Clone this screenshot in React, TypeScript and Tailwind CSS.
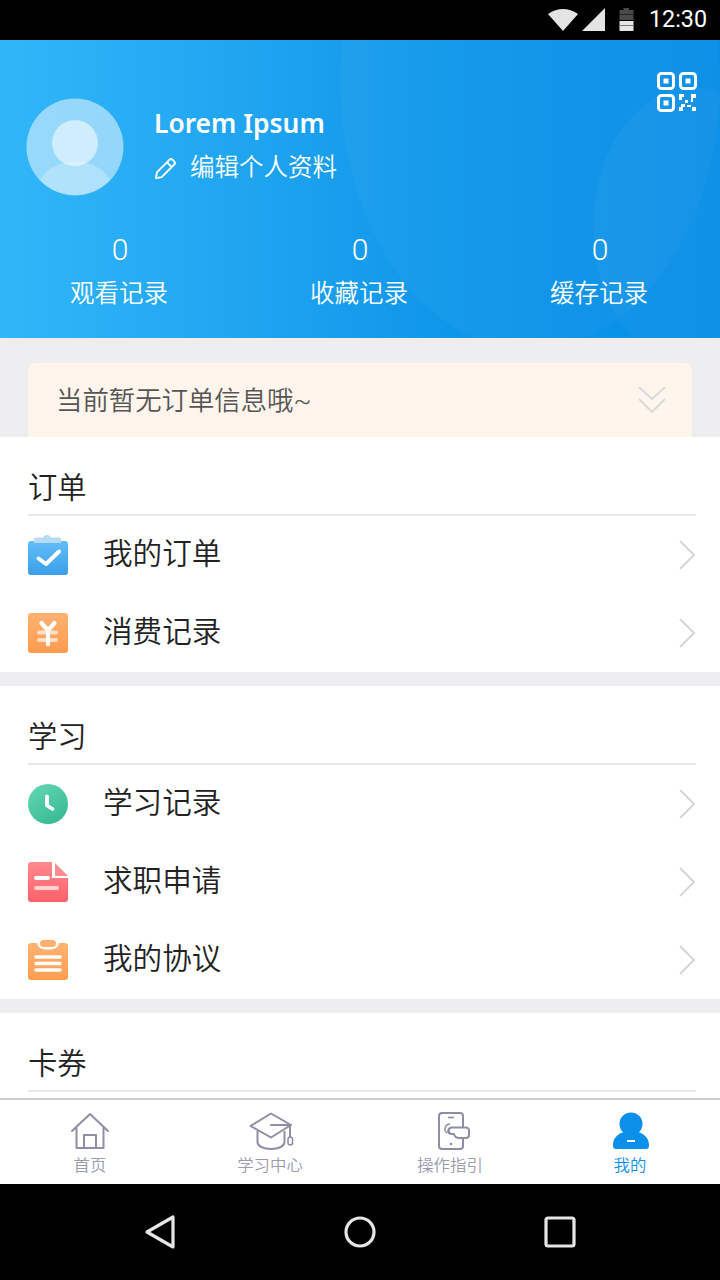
const FONT = "font-['Roboto','Noto_Sans_CJK_SC',sans-serif]";

function Chevron() {
  return (
    <svg width="18" height="32" viewBox="0 0 18 32" className="shrink-0">
      <path d="M2 2 L16 16 L2 30" fill="none" stroke="#d6d6d8" strokeWidth="2" />
    </svg>
  );
}

function OrderIcon() {
  return (
    <svg width="40" height="40" viewBox="0 0 40 40">
      <defs>
        <linearGradient id="ob" x1="0" y1="0" x2="0" y2="1"><stop offset="0" stopColor="#62bdf8" /><stop offset="1" stopColor="#3a9fe8" /></linearGradient>
      </defs>
      <rect x="0" y="6" width="40" height="34" rx="3" fill="url(#ob)" />
      <path d="M6 8 V4 a1.5 1.5 0 0 1 1.5-1.5 H15 a4.5 4.5 0 0 1 8 0 H31.5 a1.5 1.5 0 0 1 1.5 1.5 V8 Z" fill="#b5dcf3" />
      <path d="M10.5 23.5 L18 29 L31 16.5" fill="none" stroke="#fff" strokeWidth="4" strokeLinecap="round" strokeLinejoin="round" />
    </svg>
  );
}

function YenIcon() {
  return (
    <svg width="40" height="40" viewBox="0 0 40 40">
      <defs>
        <linearGradient id="yb" x1="0" y1="0" x2="0" y2="1"><stop offset="0" stopColor="#ffb272" /><stop offset="1" stopColor="#ff9a4e" /></linearGradient>
      </defs>
      <rect width="40" height="40" rx="3" fill="url(#yb)" />
      <path d="M11 19.5 H28 M11 27 H28" stroke="#ffe0c4" strokeWidth="3.8" strokeLinecap="round" />
      <path d="M13.5 10 L20 17.5 L26.5 10 M20 17.5 V31.5" fill="none" stroke="#fff" strokeWidth="4.2" strokeLinecap="round" strokeLinejoin="round" />
    </svg>
  );
}

function ClockIcon() {
  return (
    <svg width="40" height="40" viewBox="0 0 40 40">
      <defs>
        <linearGradient id="cb" x1="0.2" y1="0" x2="0.8" y2="1"><stop offset="0" stopColor="#62d6b0" /><stop offset="1" stopColor="#35b991" /></linearGradient>
      </defs>
      <circle cx="20" cy="20" r="20" fill="url(#cb)" />
      <path d="M19 12.5 V21.5 L24.5 25" fill="none" stroke="#fff" strokeWidth="3.8" strokeLinecap="round" strokeLinejoin="round" />
    </svg>
  );
}

function DocIcon() {
  return (
    <svg width="40" height="40" viewBox="0 0 40 40">
      <defs>
        <linearGradient id="db" x1="0" y1="0" x2="0" y2="1"><stop offset="0" stopColor="#ff8a90" /><stop offset="1" stopColor="#fd6169" /></linearGradient>
      </defs>
      <path d="M3 0 H24 V16 H40 V37 a3 3 0 0 1-3 3 H3 a3 3 0 0 1-3-3 V3 a3 3 0 0 1 3-3 Z" fill="url(#db)" />
      <path d="M27 1 L40 14 H27 Z" fill="#ff8a90" />
      <path d="M8 16 H20" stroke="#fff" strokeWidth="4" strokeLinecap="round" />
      <path d="M8 26 H29" stroke="#ffd0cc" strokeWidth="4" strokeLinecap="round" />
    </svg>
  );
}

function ClipIcon() {
  return (
    <svg width="40" height="40" viewBox="0 0 40 40">
      <defs>
        <linearGradient id="kb" x1="0" y1="0" x2="0" y2="1"><stop offset="0" stopColor="#ffb472" /><stop offset="1" stopColor="#ff9d52" /></linearGradient>
      </defs>
      <path d="M3 3 H9 C10 8 14 9.5 20 9.5 C26 9.5 30 8 31 3 H37 a3 3 0 0 1 3 3 V37 a3 3 0 0 1-3 3 H3 a3 3 0 0 1-3-3 V6 a3 3 0 0 1 3-3 Z" fill="url(#kb)" />
      <rect x="12" y="0" width="16" height="7" rx="3.5" fill="#ffb070" />
      <path d="M8 17 H32 M8 23.5 H32 M8 30 H32" stroke="#fff" strokeWidth="3.4" strokeLinecap="round" />
    </svg>
  );
}

function Row({ icon, label }: { icon: React.ReactNode; label: string }) {
  return (
    <div className="flex h-[78.2px] items-center pb-[1px] pl-7 pr-6">
      <div className="h-10 w-10 shrink-0">{icon}</div>
      <div className="ml-[35px] flex-1 text-[29.6px] font-[350] leading-none text-[#222222]">{label}</div>
      <Chevron />
    </div>
  );
}

function SectionTitle({ text }: { text: string }) {
  return (
    <div className="mx-6 ml-7 flex h-[79px] items-end border-b-2 border-[#e8e8ea] pb-[6px] text-[29.3px] font-[350] leading-[40px] text-[#222222]">
      {text}
    </div>
  );
}

function Stat({ label }: { label: string }) {
  return (
    <div className="flex w-60 flex-col items-center text-white">
      <div className="text-[30px] font-light leading-[36px]">0</div>
      <div className="mt-[8px] pr-[2px] text-[24.5px] font-[350] leading-[36px]">{label}</div>
    </div>
  );
}

function Tab({ label, active, icon }: { label: string; active?: boolean; icon: React.ReactNode }) {
  return (
    <div className="flex w-[180px] flex-col items-center pt-[11px]">
      <div className="flex h-[40px] items-center justify-center">{icon}</div>
      <div className={`mt-[3px] text-[16.4px] font-[350] leading-[24px] ${active ? "text-[#0a8fea]" : "text-[#9a9ab0]"}`}>{label}</div>
    </div>
  );
}

export default function App() {
  const tabStroke = "#8e8ea6";
  return (
    <div className={`flex h-[1280px] w-[720px] flex-col overflow-hidden bg-[#eeeef1] ${FONT}`}>
      <div className="flex h-10 shrink-0 items-center justify-end bg-black pr-[13px]">
        <svg width="30" height="24" viewBox="0 0 30 24" className="mr-[4px]">
          <path d="M0 7 Q15 -3 30 7 L15 24 Z" fill="#e4e4e4" transform="translate(0 -1)" />
        </svg>
        <svg width="24" height="24" viewBox="0 0 24 24" className="mr-[13px]">
          <path d="M0 23 L23 0 V23 Z" fill="#e4e4e4" />
        </svg>
        <svg width="15" height="24" viewBox="0 0 15 24" className="mr-[15px]">
          <path d="M4.5 0 H10 V2 H14.5 V12 H0.5 V2 H4.5 Z" fill="#4a4a4a" />
          <rect x="0.5" y="13" width="14" height="10" fill="#e4e4e4" />
          <rect x="0.5" y="6" width="14" height="1" fill="#222" />
          <rect x="0.5" y="17" width="14" height="1" fill="#777" />
        </svg>
        <div className="font-['Roboto'] text-[23.3px] leading-none text-white">12:30</div>
      </div>

      <div className="relative h-[298px] shrink-0 overflow-hidden bg-gradient-to-r from-[#31b6f9] via-[#0f97ea] via-[60%] to-[#078de7]">
        <svg className="absolute inset-0" width="720" height="298" viewBox="0 0 720 298">
          <ellipse cx="530" cy="40" rx="190" ry="270" fill="#ffffff" opacity="0.03" />
          <ellipse cx="693" cy="187" rx="100" ry="140" fill="#ffffff" opacity="0.035" />
        </svg>
        <div className="relative flex h-[192px] items-start pl-[26px] pt-[58px]">
          <svg width="98" height="98" viewBox="0 0 98 98" className="shrink-0">
            <circle cx="49" cy="49" r="48.5" fill="#ffffff" opacity="0.5" />
            <path d="M14 82 C22 69 34 64 49 64 C64 64 76 69 84 82 A48.5 48.5 0 0 1 14 82 Z" fill="#ffffff" opacity="0.25" />
            <circle cx="49" cy="45" r="23" fill="#ffffff" opacity="0.55" />
          </svg>
          <div className="ml-[30px]">
            <div className="mt-[2px] font-['Noto_Sans'] text-[26.4px] font-semibold leading-[46px] text-white">Lorem Ipsum</div>
            <div className="mt-[4px] flex items-center text-[24.5px] font-[350] leading-[36px] text-white">
              <svg width="23" height="23" viewBox="0 0 24 24" className="mr-[13px]">
                <path d="M2 22 L3 16 L16 3 a2.5 2.5 0 0 1 3.5 0 L21 4.5 a2.5 2.5 0 0 1 0 3.5 L8 21 Z M13.5 5.5 L18.5 10.5" fill="none" stroke="#fff" strokeWidth="2" strokeLinejoin="round" />
              </svg>
              编辑个人资料
            </div>
          </div>
          <svg width="40" height="40" viewBox="0 0 40 40" className="absolute right-[23px] top-[32px]">
            <g fill="none" stroke="#fff" strokeWidth="3">
              <rect x="1.5" y="1.5" width="15" height="15" rx="3" />
              <rect x="23.5" y="1.5" width="15" height="15" rx="3" />
              <rect x="1.5" y="23.5" width="15" height="15" rx="3" />
            </g>
            <g fill="#fff">
              <rect x="6.5" y="6.5" width="5" height="5" />
              <rect x="28.5" y="6.5" width="5" height="5" />
              <rect x="6.5" y="28.5" width="5" height="5" />
              <path d="M22 22 H27 V25 H25 V28 H22 Z" />
              <path d="M34 22 H39 V26 H36 V30 H34 Z" />
              <rect x="28" y="28" width="3" height="3" />
              <path d="M24 32 H28 V35 H26 V39 H22 V35 H24 Z" />
              <rect x="30" y="33" width="4" height="2" />
              <rect x="35" y="35" width="4" height="4" />
            </g>
          </svg>
        </div>
        <div className="relative flex">
          <Stat label="观看记录" />
          <Stat label="收藏记录" />
          <Stat label="缓存记录" />
        </div>
      </div>

      <div className="h-[99px] shrink-0 px-7 pt-[25px]">
        <div className="flex h-[74px] items-center justify-between rounded-t-lg bg-[#fff5ec] pl-[28px] pr-[26px]">
          <div className="pt-[2px] text-[26.4px] font-[350] leading-none text-[#555555]">当前暂无订单信息哦~</div>
          <svg width="28" height="28" viewBox="0 0 28 28">
            <path d="M1 1 L14 13 L27 1 M1 13 L14 26 L27 13" fill="none" stroke="#d9d9d9" strokeWidth="2" />
          </svg>
        </div>
      </div>

      <div className="h-[235px] shrink-0 bg-white">
        <SectionTitle text="订单" />
        <Row icon={<OrderIcon />} label="我的订单" />
        <Row icon={<YenIcon />} label="消费记录" />
      </div>

      <div className="mt-[14px] h-[313px] shrink-0 bg-white">
        <SectionTitle text="学习" />
        <Row icon={<ClockIcon />} label="学习记录" />
        <Row icon={<DocIcon />} label="求职申请" />
        <Row icon={<ClipIcon />} label="我的协议" />
      </div>

      <div className="mt-[14px] h-[85px] shrink-0 overflow-hidden bg-white">
        <SectionTitle text="卡券" />
      </div>

      <div className="flex h-[86px] shrink-0 border-t-2 border-[#cdcdcd] bg-white">
        <Tab
          label="首页"
          icon={
            <svg width="40" height="38" viewBox="0 0 40 38">
              <path d="M2 19 L20 2 L38 19 M6.5 16 V36 H33.5 V16 M14 36 V23 H26 V36" fill="none" stroke={tabStroke} strokeWidth="2" strokeLinecap="round" strokeLinejoin="round" />
            </svg>
          }
        />
        <Tab
          label="学习中心"
          icon={
            <svg width="46" height="38" viewBox="0 0 46 38" className="ml-1">
              <path d="M1.5 14 L22 1.5 L42 13 L22 25.5 Z" fill="none" stroke={tabStroke} strokeWidth="2" strokeLinejoin="round" />
              <path d="M8.5 19 V30 C8.5 34 14 37 22 37 C30 37 35.5 34 35.5 30 V19" fill="none" stroke={tabStroke} strokeWidth="2" />
              <path d="M22 13 H41 V25" fill="none" stroke={tabStroke} strokeWidth="2" strokeLinecap="round" />
              <rect x="39" y="25" width="4.5" height="8" rx="2.2" fill="none" stroke={tabStroke} strokeWidth="1.6" />
            </svg>
          }
        />
        <Tab
          label="操作指引"
          icon={
            <svg width="32" height="38" viewBox="0 0 32 38" className="ml-2">
              <rect x="1" y="1" width="24" height="36" rx="3" fill="none" stroke={tabStroke} strokeWidth="2" />
              <path d="M10 5.5 H16" stroke={tabStroke} strokeWidth="1.6" />
              <circle cx="13" cy="32" r="1.3" fill={tabStroke} />
              <path d="M9 21 a5 5 0 0 1 3-9 M13 22 a3 3 0 0 1 0-6" fill="none" stroke={tabStroke} strokeWidth="1.5" />
              <path d="M14 15.5 H28 a3 3 0 0 1 3 3 V23 a3 3 0 0 1-3 3 H21 Q17 26 16 22 H14 a3 3 0 0 1 0-6.5 Z" fill="#fff" stroke={tabStroke} strokeWidth="2" strokeLinejoin="round" />
            </svg>
          }
        />
        <Tab
          active
          label="我的"
          icon={
            <svg width="36" height="38" viewBox="0 0 36 38" className="ml-[2px]">
              <circle cx="18" cy="12" r="11.5" fill="#0a8fea" />
              <path d="M0 33 C0 25 6 21 12 20 C15 22.5 21 22.5 24 20 C30 21 36 25 36 33 C36 36 35 37 33 37 H3 C1 37 0 36 0 33 Z" fill="#0a8fea" />
              <rect x="14" y="28" width="8" height="2" fill="#fff" />
            </svg>
          }
        />
      </div>

      <div className="flex flex-1 items-center justify-center bg-black pb-[1px]">
        <svg width="32" height="36" viewBox="0 0 32 36" className="mr-[168px]">
          <path d="M29 3 V33 L3 18 Z" fill="none" stroke="#e6e6e6" strokeWidth="3.2" strokeLinejoin="round" />
        </svg>
        <svg width="32" height="32" viewBox="0 0 32 32" className="mr-[168px]">
          <circle cx="16" cy="16" r="14" fill="none" stroke="#e6e6e6" strokeWidth="3.2" />
        </svg>
        <svg width="32" height="32" viewBox="0 0 32 32">
          <rect x="2" y="2" width="28" height="28" rx="2" fill="none" stroke="#e6e6e6" strokeWidth="3.2" />
        </svg>
      </div>
    </div>
  );
}
